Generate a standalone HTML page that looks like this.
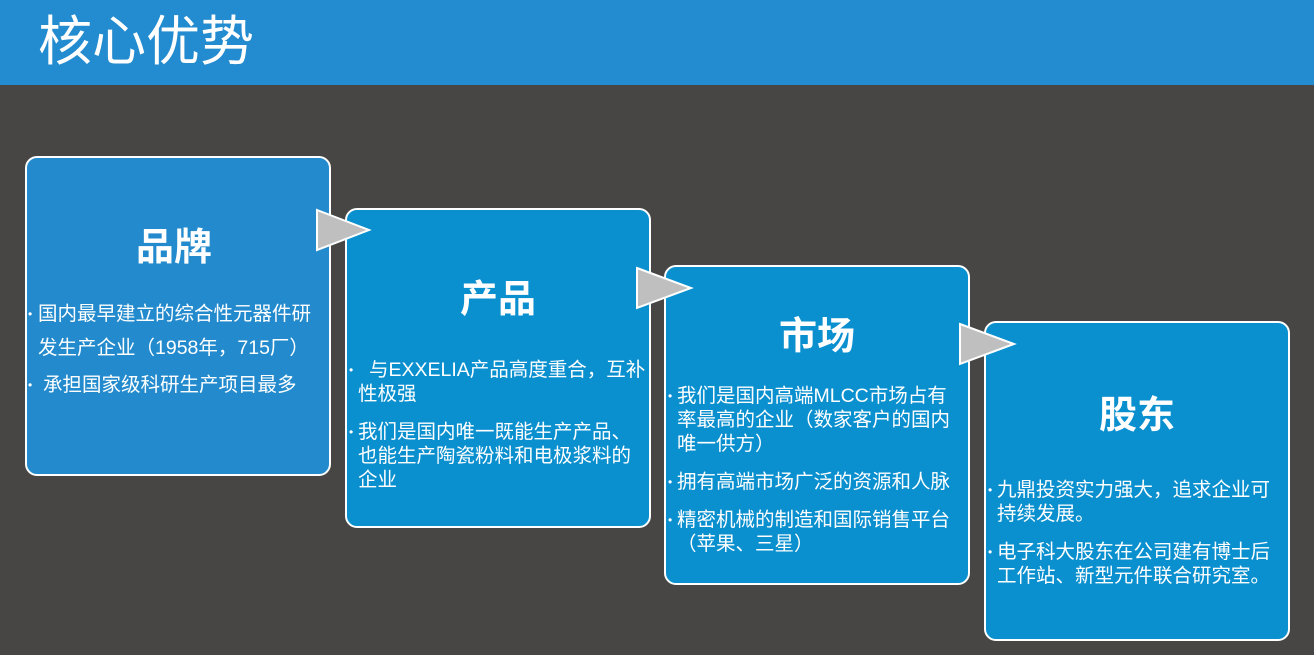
<!DOCTYPE html>
<html><head><meta charset="utf-8"><style>
*{margin:0;padding:0}
body{width:1314px;height:655px;background:#474644;position:relative;overflow:hidden;font-family:"Liberation Sans","Microsoft YaHei","Noto Sans CJK SC",sans-serif;color:#fff}
.hd{position:absolute;left:0;top:0;width:1314px;height:85px;background:#238bcf}
.hd span{position:absolute;left:38px;top:11px;font-size:54px;line-height:62px}
.box{position:absolute;width:302px;height:316px;border:2px solid #fff;border-radius:12px;background:#0a8fcf}
.t{position:absolute;font-size:19.5px;white-space:nowrap;line-height:24px}
.b{position:absolute;font-size:12px;line-height:24px}
.h{position:absolute;font-size:38px;font-weight:bold;width:302px;text-align:center;line-height:44px}
svg{position:absolute}
</style></head><body>
<div class="hd"><span>核心优势</span></div>

<div class="box" style="left:25px;top:156px;background:#238bcd">
<div class="h" style="top:68px;left:-4px">品牌</div>
</div>
<div class="b" style="left:28px;top:302px">•</div><div class="t" style="left:38px;top:302px">国内最早建立的综合性元器件研</div>
<div class="t" style="left:38px;top:336px">发生产企业（1958年，715厂）</div>
<div class="b" style="left:28px;top:373px">•</div><div class="t" style="left:43px;top:373px">承担国家级科研生产项目最多</div>

<div class="box" style="left:345px;top:208px">
<div class="h" style="top:68px">产品</div>
</div>
<div class="b" style="left:349px;top:358px">•</div><div class="t" style="left:369px;top:358px">与EXXELIA产品高度重合，互补</div>
<div class="t" style="left:358px;top:382px">性极强</div>
<div class="b" style="left:349px;top:420px">•</div><div class="t" style="left:358px;top:420px">我们是国内唯一既能生产产品、</div>
<div class="t" style="left:358px;top:444px">也能生产陶瓷粉料和电极浆料的</div>
<div class="t" style="left:358px;top:468px">企业</div>

<div class="box" style="left:664px;top:265px">
<div class="h" style="top:48px">市场</div>
</div>
<div class="b" style="left:668px;top:384px">•</div><div class="t" style="left:677px;top:384px">我们是国内高端MLCC市场占有</div>
<div class="t" style="left:677px;top:408px">率最高的企业（数家客户的国内</div>
<div class="t" style="left:677px;top:432px">唯一供方）</div>
<div class="b" style="left:668px;top:470px">•</div><div class="t" style="left:677px;top:470px">拥有高端市场广泛的资源和人脉</div>
<div class="b" style="left:668px;top:508px">•</div><div class="t" style="left:677px;top:508px">精密机械的制造和国际销售平台</div>
<div class="t" style="left:677px;top:532px">（苹果、三星）</div>

<div class="box" style="left:984px;top:321px">
<div class="h" style="top:71px">股东</div>
</div>
<div class="b" style="left:988px;top:478px">•</div><div class="t" style="left:997px;top:478px">九鼎投资实力强大，追求企业可</div>
<div class="t" style="left:997px;top:502px">持续发展。</div>
<div class="b" style="left:988px;top:540px">•</div><div class="t" style="left:997px;top:540px">电子科大股东在公司建有博士后</div>
<div class="t" style="left:997px;top:564px">工作站、新型元件联合研究室。</div>

<svg style="left:0;top:0" width="1314" height="655">
<polygon points="317,210 369,230 317,250" fill="#bfbfbf" stroke="#fff" stroke-width="2"/>
<polygon points="637,268 691,288 637,308" fill="#bfbfbf" stroke="#fff" stroke-width="2"/>
<polygon points="960,324 1014,344 960,364" fill="#bfbfbf" stroke="#fff" stroke-width="2"/>
</svg>
</body></html>
